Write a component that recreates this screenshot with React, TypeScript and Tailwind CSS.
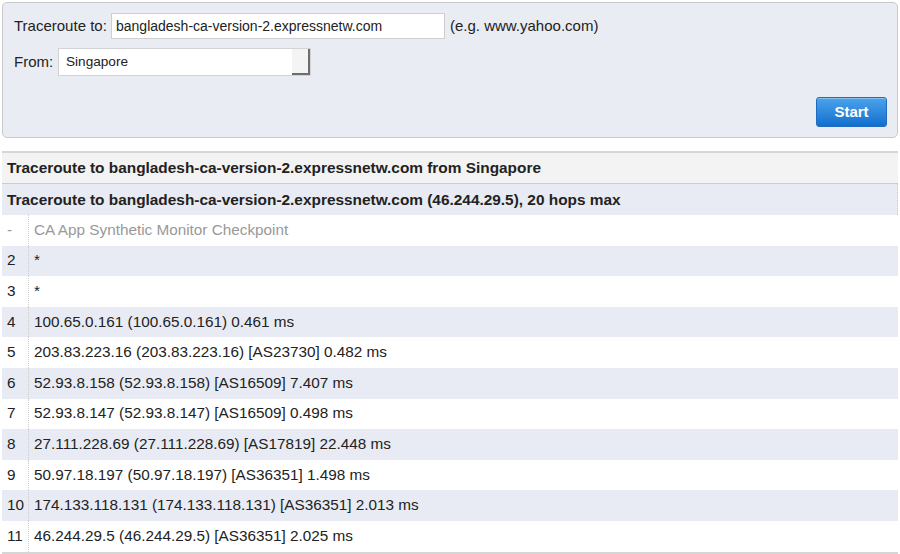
import React from "react";

const rows: [string, string, boolean?][] = [
  ["-", "CA App Synthetic Monitor Checkpoint", true],
  ["2", "*"],
  ["3", "*"],
  ["4", "100.65.0.161 (100.65.0.161) 0.461 ms"],
  ["5", "203.83.223.16 (203.83.223.16) [AS23730] 0.482 ms"],
  ["6", "52.93.8.158 (52.93.8.158) [AS16509] 7.407 ms"],
  ["7", "52.93.8.147 (52.93.8.147) [AS16509] 0.498 ms"],
  ["8", "27.111.228.69 (27.111.228.69) [AS17819] 22.448 ms"],
  ["9", "50.97.18.197 (50.97.18.197) [AS36351] 1.498 ms"],
  ["10", "174.133.118.131 (174.133.118.131) [AS36351] 2.013 ms"],
  ["11", "46.244.29.5 (46.244.29.5) [AS36351] 2.025 ms"],
];

export default function App() {
  return (
    <div
      className="w-[900px] h-[554px] bg-white text-[#222] overflow-hidden"
      style={{ fontFamily: '"Liberation Sans", Arial, sans-serif' }}
    >
      <div className="pt-[2px] px-[2px]">
        <div className="h-[136px] rounded-[5px] border border-[#c9c9c9] bg-[#e9ecf3] pl-[11px] pr-[10px] pt-[10px] flex flex-col">
          <div className="flex items-center h-[26px] text-[15px]">
            <span className="w-[97px]">Traceroute to:</span>
            <div className="w-[334px] h-[26px] bg-white border border-[#cfcfcf] flex items-center pl-[4px] text-[14px]">
              bangladesh-ca-version-2.expressnetw.com
            </div>
            <span className="ml-[5px]">(e.g. www.yahoo.com)</span>
          </div>
          <div className="flex items-center h-[28px] mt-[9px] text-[15px]">
            <span className="w-[44px]">From:</span>
            <div className="w-[253px] h-[28px] bg-white border border-[#d3d3d3] flex items-center text-[13.6px] relative">
              <span className="pl-[7px] flex-1">Singapore</span>
              <div className="w-[18px] h-[26px] bg-[#f4f4f4] border-r-[2px] border-b-[2px] border-[#6e6e6e]" />
            </div>
          </div>
          <div className="flex justify-end mt-[21px]">
            <button className="w-[71px] h-[30px] rounded-[3px] border border-[#1e6bbf] text-white font-bold text-[15px] bg-gradient-to-b from-[#4aa3ea] to-[#0f6fcf] shadow-[inset_0_1px_0_rgba(255,255,255,0.35)]">
              Start
            </button>
          </div>
        </div>
      </div>

      <div className="mt-[13px] mx-[2px] border-t-2 border-[#d6d6d6]">
        <div className="h-[31px] bg-[#f3f3f3] border-b border-[#cdcdcd] flex items-center pl-[5px] text-[15.4px] font-bold">
          Traceroute to bangladesh-ca-version-2.expressnetw.com from Singapore
        </div>
        <div className="h-[31px] bg-[#e8ebf3] flex items-center pl-[5px] text-[15.4px] font-bold border-r border-dotted border-[#c8c8c8]">
          Traceroute to bangladesh-ca-version-2.expressnetw.com (46.244.29.5), 20 hops max
        </div>
        {rows.map(([n, t, gray], i) => (
          <div
            key={i}
            className={`h-[30.6px] flex items-center text-[15.3px] ${i % 2 === 1 ? "bg-[#e8ebf3]" : "bg-white"}`}
          >
            <div
              className={`w-[27px] h-full flex items-center pl-[5px] border-r border-dotted border-[#cfcfcf] ${gray ? "text-[#999]" : ""}`}
            >
              {n}
            </div>
            <div className={`pl-[5px] ${gray ? "text-[#999]" : ""}`}>{t}</div>
          </div>
        ))}
        <div className="border-t-2 border-[#d6d6d6]" />
      </div>
    </div>
  );
}
